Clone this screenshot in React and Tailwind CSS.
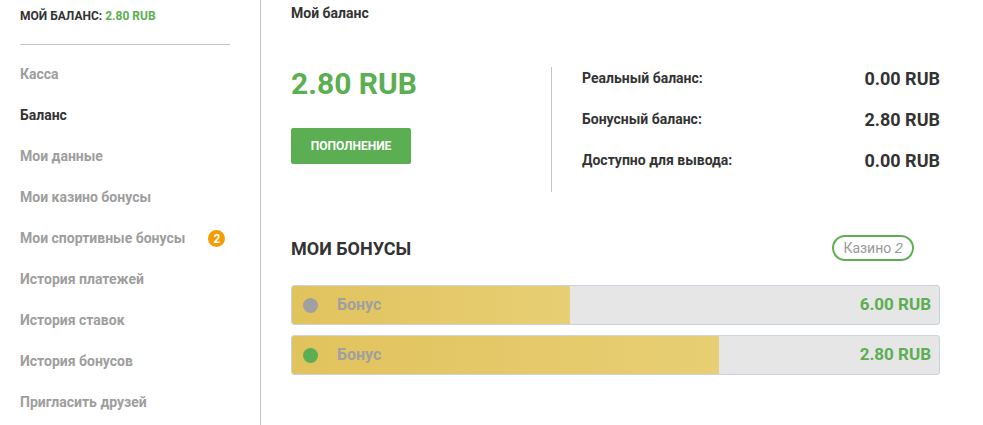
const MENU = [
  { label: 'Касса' },
  { label: 'Баланс', active: true },
  { label: 'Мои данные' },
  { label: 'Мои казино бонусы' },
  { label: 'Мои спортивные бонусы', badge: 2 },
  { label: 'История платежей' },
  { label: 'История ставок' },
  { label: 'История бонусов' },
  { label: 'Пригласить друзей' },
];

const BALANCES = [
  { label: 'Реальный баланс:', value: '0.00 RUB' },
  { label: 'Бонусный баланс:', value: '2.80 RUB' },
  { label: 'Доступно для вывода:', value: '0.00 RUB' },
];

const BONUSES = [
  { name: 'Бонус', amount: '6.00 RUB', progress: 43, active: false },
  { name: 'Бонус', amount: '2.80 RUB', progress: 66, active: true },
];

function Sidebar() {
  return (
    <aside className="w-[261px] shrink-0 border-r border-[#c4c4c4] pl-5 pr-[30px] pt-[8px] min-h-[425px]">
      <div className="text-[12px] leading-4 font-bold text-[#333] uppercase">
        Мой баланс: <span className="text-[#5cae52]">2.80 RUB</span>
      </div>
      <div className="mt-[20px] h-px bg-[#c4c4c4]" />
      <nav className="mt-[9px] flex flex-col">
        {MENU.map((item) => (
          <div
            key={item.label}
            className={`h-[41px] flex items-center text-[14px] font-bold ${item.active ? 'text-[#333]' : 'text-[#9e9e9e]'}`}
          >
            <span>{item.label}</span>
            {item.badge && (
              <span className="ml-[23px] w-[17px] h-[17px] rounded-full bg-[#f59c00] text-white text-[12px] font-bold flex items-center justify-center">
                {item.badge}
              </span>
            )}
          </div>
        ))}
      </nav>
    </aside>
  );
}

function BonusBar({ bonus }) {
  return (
    <div className="relative h-10 rounded-[3px] bg-[#e6e6e6] border border-[#cbd3de] overflow-hidden">
      <div
        className="absolute inset-y-0 left-0 bg-gradient-to-r from-[#e1c35d] to-[#e8ce74]"
        style={{ width: `${bonus.progress}%` }}
      />
      <div className="relative h-full flex items-center pl-[11px] pr-2">
        <span className={`w-[15px] h-[15px] rounded-full ${bonus.active ? 'bg-[#5cae52]' : 'bg-[#a0a0a0]'}`} />
        <span className="ml-[19px] text-[16px] font-bold text-[#a0a0a0]">{bonus.name}</span>
        <span className="ml-auto text-[17px] font-bold text-[#5cae52]">{bonus.amount}</span>
      </div>
    </div>
  );
}

export default function App() {
  return (
    <div className="flex w-[983px] h-[425px] bg-white overflow-hidden font-['Roboto','Liberation_Sans',sans-serif]">
      <Sidebar />
      <main className="pl-[30px] w-[679px] pt-[5px]">
        <h1 className="text-[14px] leading-4 font-bold text-[#333]">Мой баланс</h1>

        {/* ── Balance summary ── */}
        <div className="mt-[46px] flex">
          <div className="w-[261px] shrink-0 border-r border-[#c4c4c4] h-[125px]">
            <div className="text-[30px] leading-[34px] font-bold text-[#5cae52]">2.80 RUB</div>
            <button className="mt-[27px] w-[120px] h-9 rounded-[2px] bg-[#5cae52] text-white text-[12px] font-bold uppercase">
              Пополнение
            </button>
          </div>
          <div className="flex-1 pl-[30px] flex flex-col gap-[19px]">
            {BALANCES.map((row) => (
              <div key={row.label} className="flex items-center justify-between h-[22px]">
                <span className="text-[14px] font-bold text-[#333]">{row.label}</span>
                <span className="text-[18px] font-bold text-[#333]">{row.value}</span>
              </div>
            ))}
          </div>
        </div>

        {/* ── Bonuses ── */}
        <div className="mt-[43px] flex items-center justify-between h-[26px] pr-[26px]">
          <h2 className="text-[18px] font-bold text-[#333] uppercase">Мои бонусы</h2>
          <div className="h-[26px] w-[82px] rounded-full border-2 border-[#5cae52] flex items-center justify-center text-[14px] text-[#999]">
            Казино&nbsp;<span className="inline-block -skew-x-12">2</span>
          </div>
        </div>
        <div className="mt-6 flex flex-col gap-[10px]">
          {BONUSES.map((b, i) => (
            <BonusBar key={i} bonus={b} />
          ))}
        </div>
      </main>
    </div>
  );
}
